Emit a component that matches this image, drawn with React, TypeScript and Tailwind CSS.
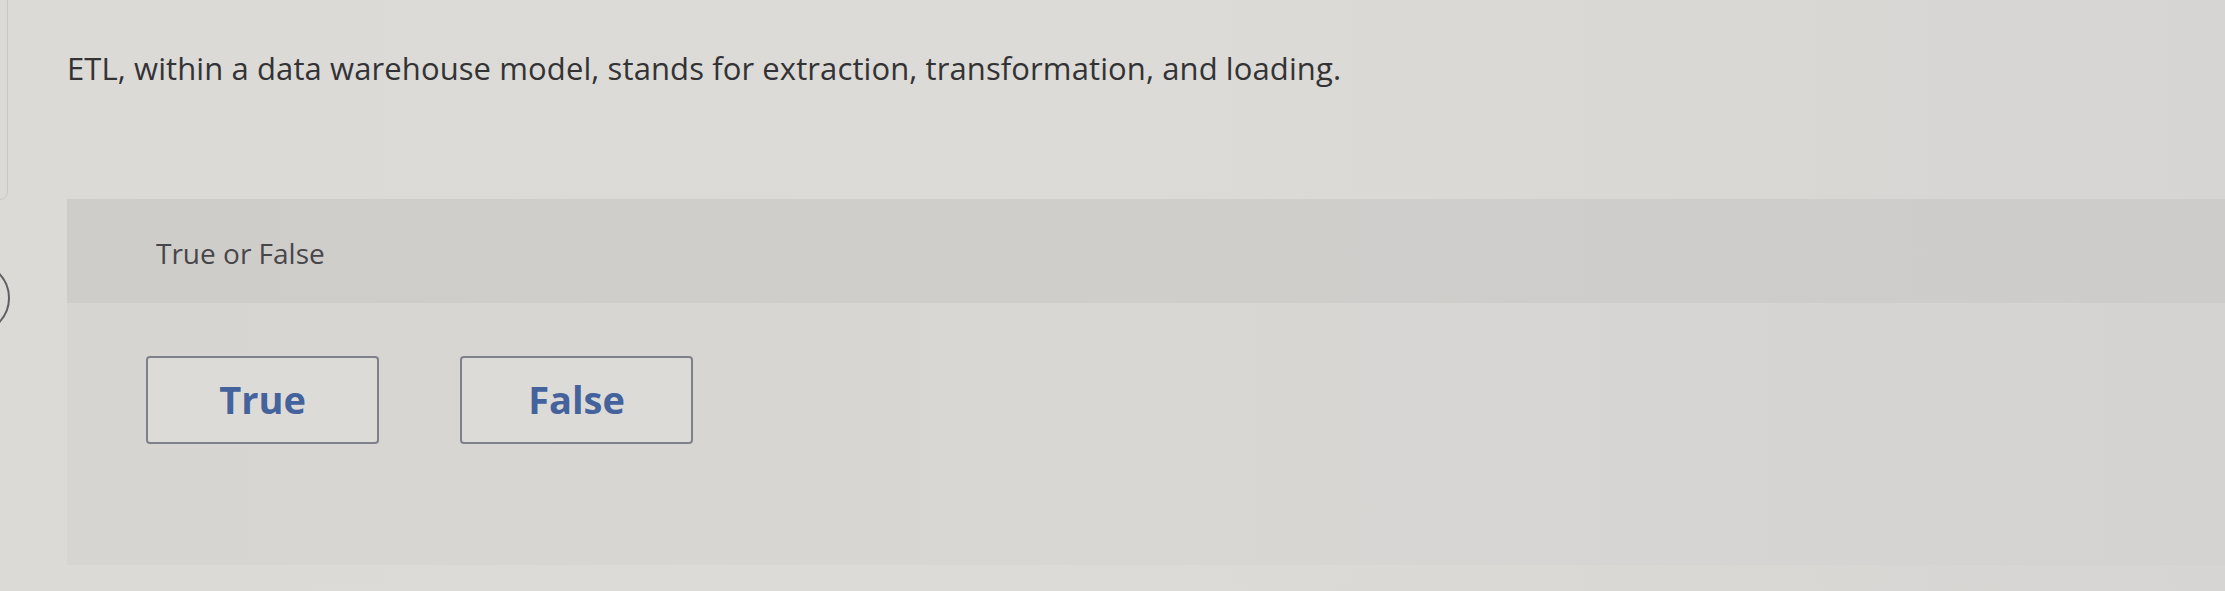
import React from "react";

function ChoiceButton({ label }: { label: string }) {
  return (
    <button
      type="button"
      className="flex h-[88px] w-[233px] items-center justify-center rounded-[4px] border-2 border-[#7e8189] bg-[#dddbd8] pb-[2px] text-[38px] font-bold leading-none text-[#44629c]"
    >
      {label}
    </button>
  );
}

export default function App() {
  return (
    <div
      className="relative h-[591px] w-full overflow-hidden bg-gradient-to-r from-[#dcdad6] via-[#dddbd7] to-[#d6d5d3] text-[#3b3b3d]"
      style={{ fontFamily: "'Open Sans', Lato, Arial, sans-serif" }}
    >
      {/* sidebar card edge */}
      <div className="absolute left-[-30px] top-[-12px] h-[212px] w-[38px] rounded-[8px] border border-[#c9c7c3]" />
      {/* navigation dot peeking in from the left */}
      <div className="absolute left-[-62px] top-[262px] h-[72px] w-[72px] rounded-full border-2 border-[#5e5f62]" />

      <div className="flex h-full flex-col">
        <p className="pl-[67px] pt-[49px] text-[31px] leading-[38px] tracking-[0.1px] text-[#333335]">
          ETL, within a data warehouse model, stands for extraction, transformation, and loading.
        </p>

        <div className="ml-[67px] mt-[112px] flex flex-col">
          <div className="h-[104px] bg-gradient-to-r from-[#cfcdca] via-[#d0cecb] to-[#cdcccb] pl-[89px] pt-[37px]">
            <span className="text-[28px] leading-[34px] text-[#47474a]">True or False</span>
          </div>
          <div className="flex h-[262px] gap-[81px] bg-gradient-to-r from-[#d7d5d2] via-[#d9d7d4] to-[#d4d3d2] pl-[79px] pt-[53px]">
            <ChoiceButton label="True" />
            <ChoiceButton label="False" />
          </div>
        </div>
      </div>
    </div>
  );
}
